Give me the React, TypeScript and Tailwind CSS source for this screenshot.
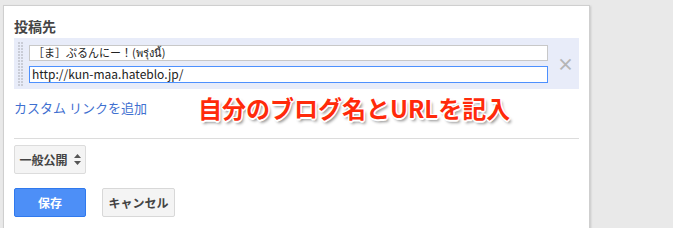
const font = "font-['Noto_Sans_CJK_JP','Liberation_Sans',sans-serif]";

function DragHandle() {
  return (
    <div className="grid h-[44px] w-[5px] grid-cols-2 gap-x-[1px] gap-y-[1px]">
      {Array.from({ length: 30 }).map((_, i) => (
        <span key={i} className="block h-[2px] w-[2px] bg-[#c9ccd6]" />
      ))}
    </div>
  );
}

export default function App() {
  return (
    <div className={`h-[228px] w-[673px] overflow-hidden bg-[#e9e9e9] pl-[3px] pt-[5px] ${font}`}>
      <div className="relative h-[230px] w-[587px] border border-[#cfcfcf] bg-white px-[10px] pt-[10px] shadow-[1px_1px_2px_rgba(0,0,0,0.15)]">
        <h2 className="text-[14px] font-bold leading-[20px] text-[#444]">投稿先</h2>

        <div className="mt-[2px] flex h-[51px] items-center bg-[#e8ecf9] pl-[4px]">
          <DragHandle />
          <div className="ml-[6px] flex w-[519px] flex-col gap-[5px]">
            <div className="flex h-[16px] items-center border border-[#c8c8c8] bg-white pl-[3px] text-[11px] text-[#222]">
              ［ま］ぷるんにー！(พรุ่งนี้)
            </div>
            <div className="flex h-[17px] items-center border border-[#4d90fe] bg-white pl-[2px] text-[12px] text-[#222]">
              http://kun-maa.hateblo.jp/
            </div>
          </div>
          <span className="ml-[9px] text-[17px] font-bold leading-none text-[#b5b5b5]">×</span>
        </div>

        <div className="flex h-[38px] items-center">
          <span className="text-[13px] text-[#3f70d0]">カスタム リンクを追加</span>
        </div>

        <div className="absolute left-[194px] top-[84px] text-[24px] font-bold leading-[36px] text-[#ff2a0a] [text-shadow:1.5px_0_0_#fff,-1.5px_0_0_#fff,0_1.5px_0_#fff,0_-1.5px_0_#fff,1px_1px_0_#fff,-1px_-1px_0_#fff,1px_-1px_0_#fff,-1px_1px_0_#fff,2px_3px_3px_rgba(0,0,0,0.45)]">
          自分のブログ名とURLを記入
        </div>

        <div className="mt-[11px] border-t border-[#dcdcdc]" />

        <div className="mt-[6px] flex h-[29px] w-[72px] items-center justify-center gap-[6px] rounded-[2px] border border-[#dcdcdc] bg-[#f4f4f4] text-[12px] font-bold text-[#444]">
          <span>一般公開</span>
          <svg width="7" height="11" viewBox="0 0 7 11" fill="#555">
            <path d="M3.5 0L7 4H0z" />
            <path d="M3.5 11L0 7h7z" />
          </svg>
        </div>

        <div className="mt-[14px] flex gap-[16px]">
          <button className="flex h-[29px] w-[72px] items-center justify-center rounded-[2px] border border-[#3079ed] bg-[#4d8ff7] text-[12px] font-bold text-white">
            保存
          </button>
          <button className="flex h-[29px] w-[73px] items-center justify-center rounded-[2px] border border-[#d8d8d8] bg-[#f4f4f4] text-[12px] font-bold text-[#444]">
            キャンセル
          </button>
        </div>
      </div>
    </div>
  );
}
